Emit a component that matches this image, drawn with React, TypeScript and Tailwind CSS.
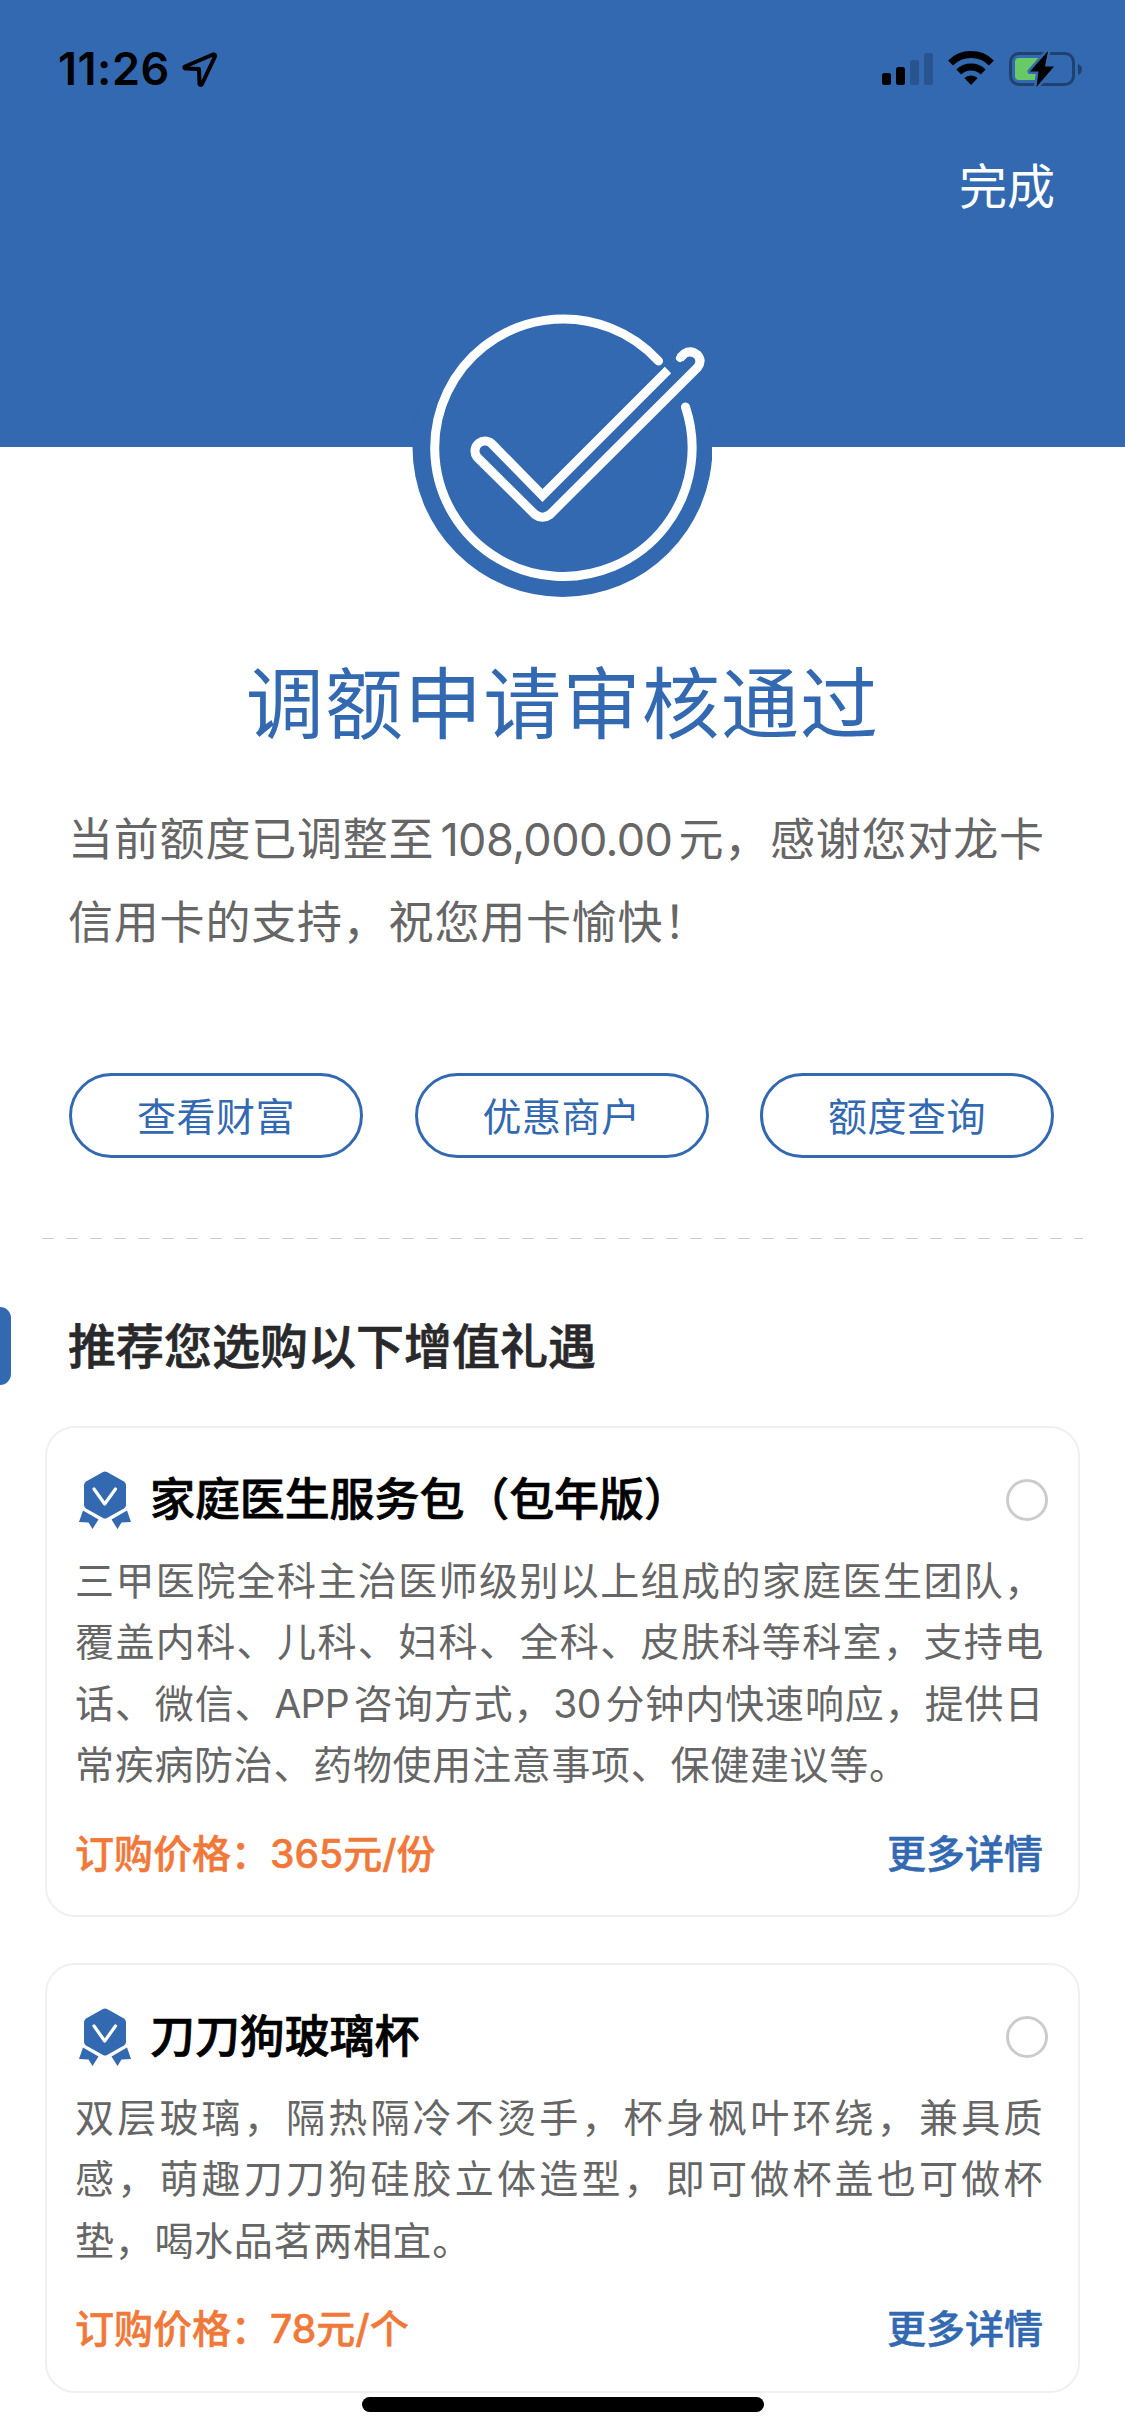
import React from "react";

type Line = { text: React.ReactNode; cls: string };
type Offer = { title: string; lines: Line[]; price: string };

const offers: Offer[] = [
  {
    title: "家庭医生服务包（包年版）",
    lines: [
      { text: "三甲医院全科主治医师级别以上组成的家庭医生团队，", cls: "tracking-[1.4px]" },
      { text: "覆盖内科、儿科、妇科、全科、皮肤科等科室，支持电", cls: "tracking-[1.4px]" },
      {
        text: (
          <>
            话、微信、<span className="mr-[5px] tracking-[-0.8px]">APP</span>咨询方式，
            <span className="mr-[5px] tracking-[-0.8px]">30</span>分钟内快速响应，提供日
          </>
        ),
        cls: "tracking-[0.9px]",
      },
      { text: "常疾病防治、药物使用注意事项、保健建议等。", cls: "tracking-[0.7px]" },
    ],
    price: "订购价格：365元/份",
  },
  {
    title: "刀刀狗玻璃杯",
    lines: [
      { text: "双层玻璃，隔热隔冷不烫手，杯身枫叶环绕，兼具质", cls: "tracking-[3.2px]" },
      { text: "感，萌趣刀刀狗硅胶立体造型，即可做杯盖也可做杯", cls: "tracking-[3.2px]" },
      { text: "垫，喝水品茗两相宜。", cls: "tracking-[0.7px]" },
    ],
    price: "订购价格：78元/个",
  },
];

function LocationArrow() {
  return (
    <svg className="h-[36px] w-[36px]" viewBox="0 0 36 36" fill="none">
      <path d="M31 2.500 L3 14.500 Q1.500 16 3.500 16.500 L17 17 L17.500 32 Q18.500 34 20 32 L33 4.500 Q33.300 2 31 2.500 Z" stroke="#000" strokeWidth="4" strokeLinejoin="round" />
    </svg>
  );
}

function StatusIcons() {
  return (
    <svg className="h-[40px] w-[204px]" viewBox="0 0 204 40">
      <rect x="0" y="23" width="9" height="12" rx="2.5" />
      <rect x="14" y="17" width="9" height="18" rx="2.5" />
      <rect x="28" y="10" width="9" height="25" rx="2.5" fill="#28548f" />
      <rect x="42" y="3" width="9" height="32" rx="2.5" fill="#28548f" />
      <g fill="none" stroke="#000" strokeWidth="7">
        <path d="M68.6 13 A29 29 0 0 1 109.4 13" />
        <path d="M76.8 22 A17.5 17.5 0 0 1 101.2 22" />
      </g>
      <path d="M82.3 28 A10 10 0 0 1 95.7 28 L89 35 Z" />
      <rect x="128.5" y="3.500" width="63" height="31" rx="8.500" fill="none" stroke="#20426f" strokeWidth="3" />
      <path d="M196 14 Q200 15.500 200 19 Q200 23.500 196 25 Z" fill="#20426f" />
      <rect x="133" y="8" width="31" height="22" rx="4" fill="#68c966" />
      <path d="M166 1 L148 21.500 H156.500 L154.500 37 L172 16.500 H163 Z" fill="#000" stroke="#3269b1" strokeWidth="5" paintOrder="stroke" strokeLinejoin="round" />
    </svg>
  );
}

function CheckBadge() {
  return (
    <svg className="h-[300px] w-[300px]" viewBox="0 0 300 300" fill="none">
      <circle cx="150.500" cy="150" r="150" fill="#3269b1" />
      <g stroke="#fff" strokeWidth="9">
        <path d="M246.500 64 A128.700 128.700 0 1 0 273.500 110" strokeLinecap="round" />
        <path d="M256 73 L130.500 198.500 L81 148 A8 8 0 0 0 65 160 L123 217.500 Q130.500 223 138 217.500 L285.500 70.500 Q290.500 64 285.500 58 Q279 52.500 272.500 56.500 L268 61" />
        <path d="M268.500 60.500 L268 61" strokeLinecap="round" strokeWidth="8" />
      </g>
    </svg>
  );
}

function Medal() {
  return (
    <svg className="h-[58px] w-[52px] shrink-0" viewBox="0 0 52 58">
      <path d="M24 1 Q26 0 28 1 L45 10.500 Q47 12 47 14 V34 Q47 36 45 37.500 L28 47 Q26 48 24 47 L7 37.500 Q5 36 5 34 V14 Q5 12 7 10.500 Z" fill="#3269b1" />
      <path d="M4 39.500 L19.500 48.500 L13.500 58 L9.500 51.500 L0 51 Z M48 39.500 L32.500 48.500 L38.500 58 L42.500 51.500 L52 51 Z" fill="#3269b1" />
      <path d="M15 18 L25.700 33 L36.500 18" fill="none" stroke="#fff" strokeWidth="3.200" strokeLinecap="round" strokeLinejoin="round" />
    </svg>
  );
}

function OfferCard({ offer }: { offer: Offer }) {
  return (
    <section className="rounded-[30px] border-2 border-[#f0f0f0] pr-[30px] pl-[28px] pt-[38px]">
      <div className="flex h-[68px] items-center pl-[4px]">
        <Medal />
        <h3 className="ml-[19px] grow text-[45px] leading-[68px] font-medium tracking-[-0.1px] text-black [-webkit-text-stroke:0.7px]">{offer.title}</h3>
        <span className="h-[42px] w-[42px] rounded-full border-[3px] border-[#ccc]" />
      </div>
      <div className="mt-[16px] text-[39px] leading-[61.4px] text-[#666]">
        {offer.lines.map((l, i) => (
          <p key={i} className={"whitespace-nowrap " + l.cls}>{l.text}</p>
        ))}
      </div>
      <div className="mt-[25px] mb-[28.4px] flex justify-between pr-[5px] text-[39px] leading-[66px] font-medium [-webkit-text-stroke:0.5px]">
        <span className="text-[#f07838]">{offer.price}</span>
        <a className="text-[#3269b1]">更多详情</a>
      </div>
    </section>
  );
}

export default function App() {
  return (
    <main className="relative h-[2436px] w-[1125px] overflow-hidden bg-white font-['Inter','Noto_Sans_CJK_SC',sans-serif] text-[#666]">
      <header className="h-[447px] bg-[#3269b1]">
        <div className="flex h-[140px] items-center justify-between pr-[39px] pl-[58px]">
          <div className="flex items-center text-[45px] leading-[60px] font-semibold text-black">
            <span className="-mt-[3px] w-[124px] tracking-[0.5px]">11:26</span>
            <LocationArrow />
          </div>
          <StatusIcons />
        </div>
        <div className="flex justify-end pr-[70px]">
          <span className="text-[48px] leading-[94px] text-white">完成</span>
        </div>
      </header>
      <div className="-mt-[150px] pl-[412px]">
        <CheckBadge />
      </div>
      <h1 className="mt-[48px] text-center text-[78px] leading-[120px] tracking-[1.2px] text-[#3269b1]">调额申请审核通过</h1>
      <div className="mt-[34px] pl-[68px] text-[45px] leading-[82.5px] tracking-[0.8px]">
        <p className="whitespace-nowrap">
          当前额度已调整至<span className="mr-[6px] ml-[6px] tracking-[-0.6px]">108,000.00</span>元，感谢您对龙卡
        </p>
        <p className="whitespace-nowrap">信用卡的支持，祝您用卡愉快！</p>
      </div>
      <div className="mt-[109px] flex justify-between pr-[71px] pl-[69px]">
        {["查看财富", "优惠商户", "额度查询"].map((t) => (
          <button key={t} className="h-[85px] w-[294px] rounded-full border-[3px] border-[#3269b1] pt-[2px] text-[39px] leading-[77px] tracking-[0.5px] text-[#3269b1]">{t}</button>
        ))}
      </div>
      <div className="mx-[42px] mt-[80px] h-px bg-[repeating-linear-gradient(90deg,#ccc_0_12px,transparent_12px_24px)]" />
      <div className="mt-[68px] flex h-[78px] items-center">
        <span className="h-[78px] w-[11px] rounded-r-[11px] bg-[#3269b1]" />
        <h2 className="mt-[2px] ml-[57px] text-[48px] font-medium text-[#29292b] [-webkit-text-stroke:0.7px]">推荐您选购以下增值礼遇</h2>
      </div>
      <div className="mt-[41px] flex flex-col gap-[46px] px-[45px]">
        {offers.map((o) => (
          <OfferCard key={o.title} offer={o} />
        ))}
      </div>
      <div className="absolute top-[2397px] left-[362px] h-[15px] w-[402px] rounded-full bg-black" />
    </main>
  );
}
